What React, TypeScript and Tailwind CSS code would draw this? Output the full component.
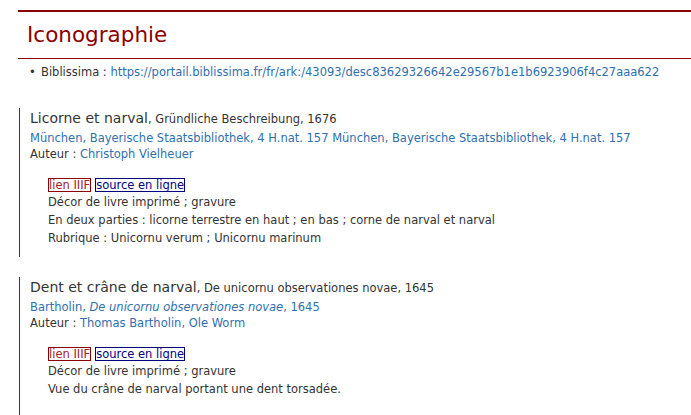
import React from "react";

type Entry = {
    title: string;
    meta: string;
    source: React.ReactNode;
    author: string;
    lines: string[];
};

const entries: Entry[] = [
    {
        title: "Licorne et narval",
        meta: "Gründliche Beschreibung, 1676",
        source: (
            <a className="text-[#2f6fae]" href="#">
                München, Bayerische Staatsbibliothek, 4 H.nat. 157 München, Bayerische Staatsbibliothek, 4 H.nat. 157
            </a>
        ),
        author: "Christoph Vielheuer",
        lines: [
            "Décor de livre imprimé ; gravure",
            "En deux parties : licorne terrestre en haut ; en bas ; corne de narval et narval",
            "Rubrique : Unicornu verum ; Unicornu marinum",
        ],
    },
    {
        title: "Dent et crâne de narval",
        meta: "De unicornu observationes novae, 1645",
        source: (
            <a className="text-[#2f6fae]" href="#">
                Bartholin, <i>De unicornu observationes novae</i>, 1645
            </a>
        ),
        author: "Thomas Bartholin, Ole Worm",
        lines: ["Décor de livre imprimé ; gravure", "Vue du crâne de narval portant une dent torsadée."],
    },
];

const EntryBlock = ({ entry }: { entry: Entry }) => {
    return (
        <div className="ml-px border-l border-[#7a1c24] pl-[10px] pb-[10px] last:pb-[17px]">
            <div className="leading-[20px] mb-[1px]">
                <span className="text-[14px]">{entry.title}</span>, {entry.meta}
            </div>
            <div className="leading-[16px]">{entry.source}</div>
            <div className="leading-[16px]">
                Auteur : <a className="text-[#2f6fae]" href="#">{entry.author}</a>
            </div>
            <div className="pl-[18px] mt-[16px]">
                <div className="flex gap-[4px] leading-[12px]">
                    <span className="border border-[#8b0000] text-[#a0232a]">lien IIIF</span>
                    <span className="border border-[#000080] text-[#000080]">source en ligne</span>
                </div>
                <div className="mt-[1px] leading-[18px]">
                    {entry.lines.map((line) => (
                        <div key={line}>{line}</div>
                    ))}
                </div>
            </div>
        </div>
    );
};

export default function App() {
    return (
        <div className="min-h-screen bg-white text-[#333] text-[11.5px] font-['DejaVu_Sans',sans-serif]">
            <div className="ml-[18px] pt-[10px]">
                <h2 className="border-t-2 border-b border-[#8b0000] pl-[9px] text-[21.5px] leading-[46px] text-[#8b0000]">
                    Iconographie
                </h2>
                <div className="mt-[4px] flex pl-[11px] leading-[18px]">
                    <span className="w-[12px]">•</span>
                    <span>
                        Biblissima :{" "}
                        <a className="text-[#2f6fae]" href="#">
                            https://portail.biblissima.fr/fr/ark:/43093/desc83629326642e29567b1e1b6923906f4c27aaa622
                        </a>
                    </span>
                </div>
                <div className="mt-[27px] flex flex-col gap-[20px]">
                    {entries.map((entry) => (
                        <EntryBlock key={entry.title} entry={entry} />
                    ))}
                </div>
            </div>
        </div>
    );
}
